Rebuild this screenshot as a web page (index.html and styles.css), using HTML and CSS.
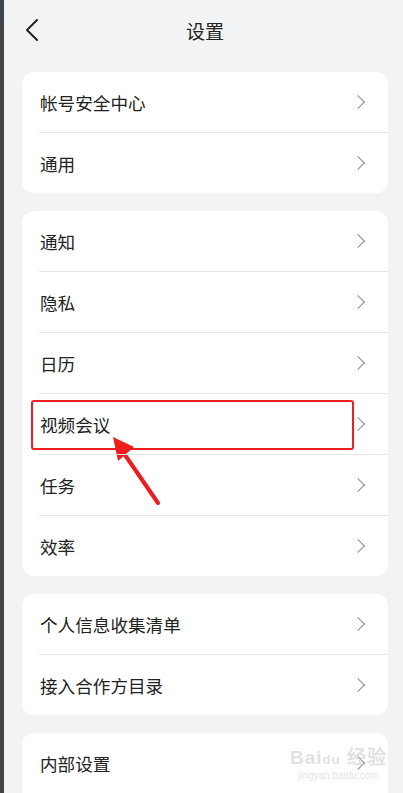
FILE: index.html
```html
<!DOCTYPE html>
<html lang="zh-CN">
<head>
    <meta charset="UTF-8">
    <title>设置</title>
    <link rel="stylesheet" href="styles.css">
</head>
<body>
    <div class="edge"></div>
    <div class="page">
        <div class="header">
            <svg class="back" width="14" height="24" viewBox="0 0 14 24">
                <path d="M12 2 L2 12 L12 22" fill="none" stroke="#222" stroke-width="2" stroke-linecap="round" stroke-linejoin="round"/>
            </svg>
            <h1>设置</h1>
        </div>

        <div class="card">
            <div class="row"><span>帐号安全中心</span><i class="arrow"></i></div>
            <div class="row"><span>通用</span><i class="arrow"></i></div>
        </div>

        <div class="card">
            <div class="row"><span>通知</span><i class="arrow"></i></div>
            <div class="row"><span>隐私</span><i class="arrow"></i></div>
            <div class="row"><span>日历</span><i class="arrow"></i></div>
            <div class="row marked">
                <span>视频会议</span><i class="arrow"></i>
                <div class="highlight"></div>
                <svg class="pointer" width="70" height="80" viewBox="0 0 70 80">
                    <line x1="57" y1="71" x2="24" y2="23" stroke="#ee1c1c" stroke-width="4" stroke-linecap="round"/>
                    <polygon points="12,5 33,15 17,29" fill="#ee1c1c"/>
                </svg>
            </div>
            <div class="row"><span>任务</span><i class="arrow"></i></div>
            <div class="row"><span>效率</span><i class="arrow"></i></div>
        </div>

        <div class="card">
            <div class="row"><span>个人信息收集清单</span><i class="arrow"></i></div>
            <div class="row"><span>接入合作方目录</span><i class="arrow"></i></div>
        </div>

        <div class="card">
            <div class="row"><span>内部设置</span><i class="arrow"></i></div>
            <div class="row"><span></span></div>
        </div>

        <div class="watermark">
            <div class="wm-logo">Bai<b>du</b> 经验</div>
            <div class="wm-url">jingyan.baidu.com</div>
        </div>
    </div>
</body>
</html>
```

FILE: styles.css
```css
body {
    margin: 0;
    display: flex;
    height: 793px;
    overflow: hidden;
    background-color: #f2f3f5;
    font-family: "Noto Sans CJK SC", "Noto Sans", sans-serif;
    color: #222;
}

.edge {
    width: 4px;
    flex-shrink: 0;
    background: linear-gradient(#3d4452 0, #3d4452 22px, #444 22px);
}

.page {
    flex: 1;
    position: relative;
    padding: 0 15px 0 18px;
}

.header {
    height: 60px;
    display: flex;
    align-items: center;
    justify-content: center;
    position: relative;
}

.back {
    position: absolute;
    left: 3px;
    top: 18px;
}

h1 {
    margin: 0;
    font-size: 19px;
    font-weight: normal;
    color: #222;
}

.card {
    background-color: #ffffff;
    border-radius: 12px;
    margin-top: 12px;
    margin-bottom: 18px;
    overflow: hidden;
}

.card + .card {
    margin-top: 0;
}

.row {
    height: 60px;
    display: flex;
    align-items: center;
    justify-content: space-between;
    padding: 0 22px 0 18px;
    font-size: 17.6px;
    position: relative;
}

.row + .row {
    border-top: 1px solid #e4e5e7;
    margin-left: 17px;
    padding-left: 1px;
}

.arrow {
    width: 9px;
    height: 9px;
    border-top: 1.5px solid #8c8c8c;
    border-right: 1.5px solid #8c8c8c;
    transform: rotate(45deg);
    margin-right: 3px;
}

.highlight {
    position: absolute;
    left: -8px;
    top: 6px;
    width: 319px;
    height: 46px;
    border: 2.5px solid #f01f1f;
    border-radius: 3px;
}

.pointer {
    position: absolute;
    left: 62px;
    top: 38px;
}

.card:nth-of-type(3) {
    overflow: visible;
}

.watermark {
    position: absolute;
    left: 286px;
    top: 742px;
    color: rgba(200, 200, 205, 0.55);
    text-align: center;
}

.wm-logo {
    font-family: "Liberation Sans", sans-serif;
    font-size: 19px;
    font-weight: bold;
    letter-spacing: 1px;
}

.wm-logo b {
    font-size: 13px;
}

.wm-url {
    font-family: "Liberation Sans", sans-serif;
    font-size: 10px;
    margin-top: 1px;
}
```
